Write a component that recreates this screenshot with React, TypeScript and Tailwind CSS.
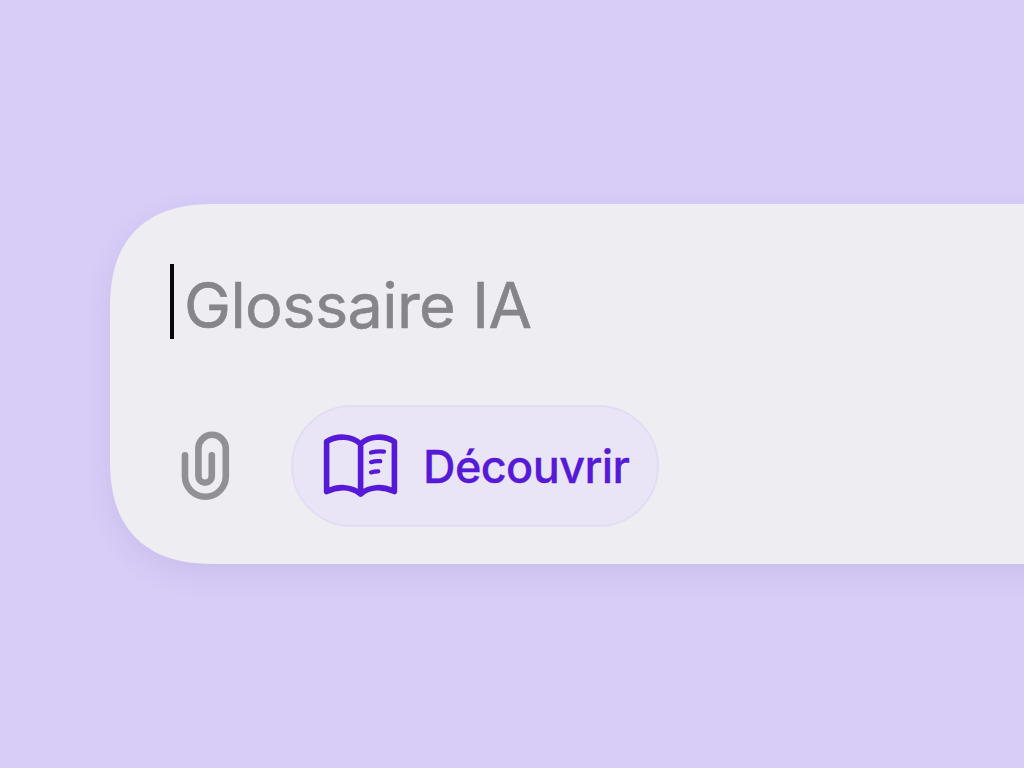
function PaperclipIcon() {
  return (
    <svg
      viewBox="181 431 50 70"
      className="h-[70px] w-[50px] shrink-0"
      fill="none"
      stroke="#919095"
      strokeWidth="6.6"
      strokeLinecap="round"
      aria-hidden="true"
    >
      <path d="M185 455.3V476.3A20.4 20.4 0 0 0 225.8 476.3V448.5A13.7 13.7 0 0 0 198.4 448.5V476A6.7 6.7 0 0 0 211.8 476V455.3" />
    </svg>
  );
}

function BookIcon() {
  return (
    <svg
      viewBox="322 432 78 68"
      className="h-[68px] w-[78px] shrink-0"
      fill="none"
      stroke="#5619d8"
      strokeLinecap="round"
      strokeLinejoin="round"
      aria-hidden="true"
    >
      <path
        strokeWidth="5.6"
        d="M360.6 444C352 435.6 337 435 326.6 441.6V491.6C338 486 351 486 360.6 494C370 486 383 486 394.4 491.6V441.6C384 435 369 435.6 360.6 444ZM360.6 444V494"
      />
      <path
        strokeWidth="4.2"
        d="M371 452.6Q377.5 450.8 384 451.6M371 462.2Q375.5 460.7 380.3 461.2M371 472.4Q374.5 471.2 378.3 471.3"
      />
    </svg>
  );
}

export default function App() {
  return (
    <main className="flex h-screen items-start overflow-hidden bg-[#d8cdf7] pt-[204px] pl-[110px] font-['Inter','Liberation_Sans',sans-serif]">
      <section className="h-[360px] w-[1100px] shrink-0 rounded-[106px] bg-[#eeedf2] pt-[60px] pl-[60px] shadow-[0_10px_28px_rgba(95,75,165,0.11)] [corner-shape:superellipse(1.3)]">
        <div className="flex h-[75px] items-center">
          <span className="h-[75px] w-1 bg-[#08080a]" />
          <span className="ml-[10px] pt-[8px] text-[63px] leading-[75px] tracking-[-0.6px] whitespace-nowrap text-[#868589] [-webkit-text-stroke:0.6px_#868589]">
            Glossaire IA
          </span>
        </div>

        <div className="mt-[66px] flex h-[122px] items-center pl-[11px]">
          <PaperclipIcon />
          <button
            type="button"
            className="ml-[60px] flex h-[122px] w-[368px] items-center rounded-full border-2 border-[#e2ddf5] bg-[#e9e5f7] pl-[29px] text-[#5619d8]"
          >
            <BookIcon />
            <span className="ml-[23px] pt-[2px] text-[45px] font-medium tracking-[-0.6px] whitespace-nowrap [-webkit-text-stroke:0.3px_#5619d8]">
              Découvrir
            </span>
          </button>
        </div>
      </section>
    </main>
  );
}
